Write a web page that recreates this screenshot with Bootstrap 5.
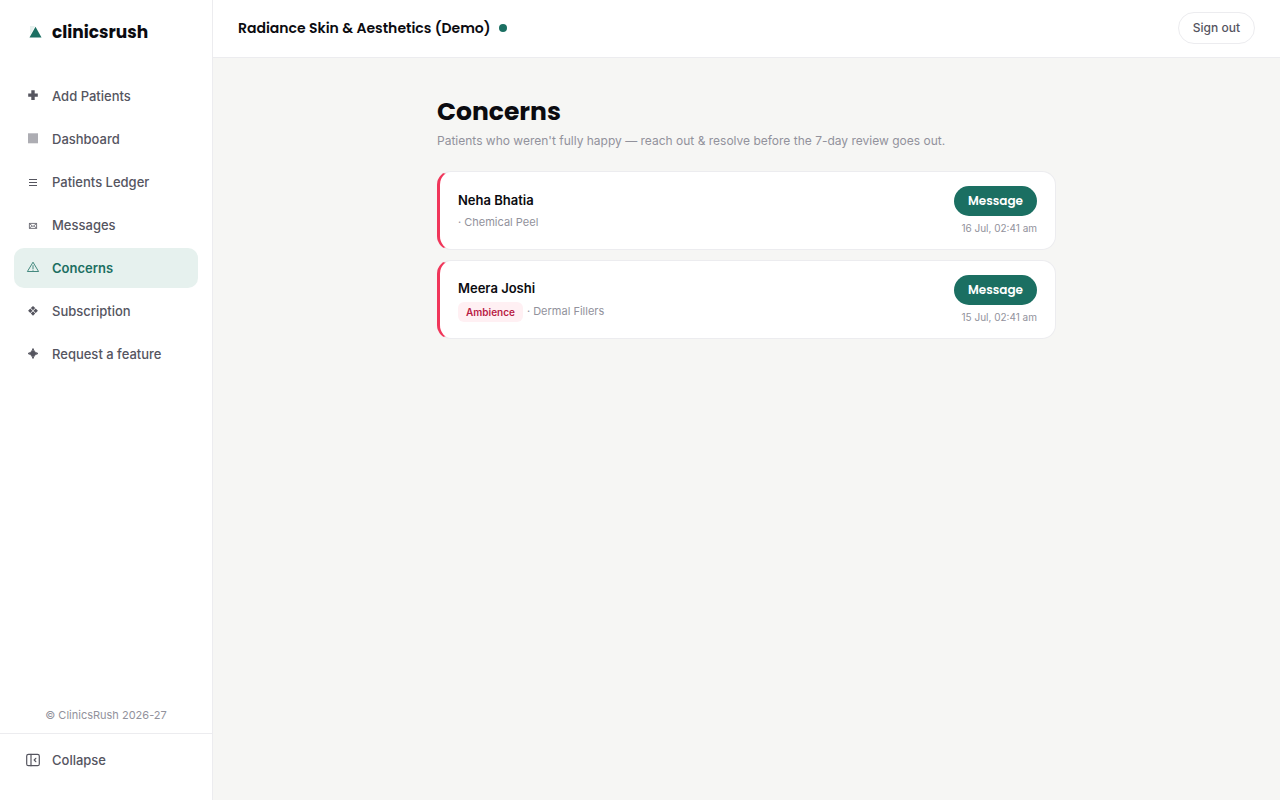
<!DOCTYPE html>
<html lang="en">
<head>
<meta charset="utf-8">
<meta name="viewport" content="width=device-width, initial-scale=1">
<title>Concerns · clinicsrush</title>
<link href="https://cdn.jsdelivr.net/npm/bootstrap@5.3.0/dist/css/bootstrap.min.css" rel="stylesheet">
<style>
  :root { --brand: #1b6f62; --ink: #0b0b10; --slate: #55555f; --muted: #92929c; --line: #ececef; }
  body { font-family: Inter, "Liberation Sans", sans-serif; font-size: 13px; line-height: 20px; color: var(--ink); background: #f6f6f4; }
  .display-font { font-family: Poppins, Inter, "Liberation Sans", sans-serif; }
  .sidebar { width: 213px; border-right: 1px solid var(--line); }
  .brand { height: 64px; padding-left: 29px; gap: 10px; font-size: 17px; font-weight: 700; color: var(--ink); }
  .side-nav { padding: 12px 14px; gap: 3px; }
  .side-link { height: 40px; padding: 0 12px; gap: 12px; border: 0; border-radius: 10px; background: none; color: var(--slate); font-weight: 500; text-decoration: none; }
  .side-link svg { width: 14px; height: 14px; flex: none; }
  .side-link.active { background: #e6f1ee; color: var(--brand); font-weight: 600; }
  .copyright { font-size: 11px; color: var(--muted); padding-bottom: 8px; }
  .side-foot { border-top: 1px solid var(--line); padding: 6px 14px 20px; }
  .topbar { padding: 12px 25px 13px; border-bottom: 1px solid var(--line); }
  .clinic { font-size: 14px; font-weight: 600; }
  .status-dot { width: 8px; height: 8px; background: var(--brand); }
  .sign-out { height: 32px; padding: 0 14px; border: 1px solid var(--line); background: #fff; color: var(--slate); font-size: 12px; font-weight: 500; }
  .content { max-width: 619px; padding-top: 36px; }
  .page-title { font-size: 25px; line-height: 36px; font-weight: 700; }
  .subtitle { font-size: 12px; color: var(--muted); margin: 1px 0 20px; }
  .concern-list { gap: 10px; }
  .concern { padding: 14px 18px; border: 1px solid var(--line); border-left: 3px solid #f0365a; border-radius: 14px; }
  .patient { font-size: 13px; font-weight: 600; line-height: 20px; }
  .detail { font-size: 11px; line-height: 17px; color: var(--muted); margin-top: 4px; }
  .tag { padding: 0 8px; border-radius: 6px; background: #fff0f3; color: #b91c45; font-size: 10px; line-height: 20px; font-weight: 600; }
  .message { height: 30px; padding: 0 14px; border: 0; background: var(--brand); color: #fff; font-size: 12px; font-weight: 600; }
  .stamp { font-size: 10px; line-height: 14px; color: var(--muted); margin-top: 5px; }
</style>
</head>
<body>
<div class="d-flex min-vh-100">
  <aside class="sidebar d-flex flex-column flex-shrink-0 bg-white">
    <a href="#" class="brand display-font d-flex align-items-center text-decoration-none">
      <svg width="13" height="13" viewBox="0 0 13 13" aria-hidden="true"><path d="M1 0h5L1 9z" fill="#e6f1ee"/><path d="M6.500 .8 12.500 11.500H.5z" fill="#1b6f62"/></svg>
      <span>clinicsrush</span>
    </a>
    <nav class="side-nav d-flex flex-column">
      <a href="#" class="side-link d-flex align-items-center"><svg viewBox="0 0 14 14" fill="currentColor" aria-hidden="true"><path d="M5.300 1.300h3.400v3.100h3.100v3.400H8.700v3.100H5.300V7.800H2.200V4.400h3.100z"/></svg>Add Patients</a>
      <a href="#" class="side-link d-flex align-items-center"><svg viewBox="0 0 14 14" aria-hidden="true"><path d="M2 1.300h10v10H2z" fill="#adadb3"/></svg>Dashboard</a>
      <a href="#" class="side-link d-flex align-items-center"><svg viewBox="0 0 14 14" fill="none" stroke="currentColor" aria-hidden="true"><path d="M3 4.500h8M3 7.500h8M3 10.500h8"/></svg>Patients Ledger</a>
      <a href="#" class="side-link d-flex align-items-center"><svg viewBox="0 0 14 14" fill="none" stroke="currentColor" stroke-width=".8" aria-hidden="true"><path d="M3.400 5.400h7.200v5H3.400zM3.400 5.400 7 8.600l3.600-3.200M3.400 10.400 6 7.800M10.600 10.400 8 7.800"/></svg>Messages</a>
      <a href="#" class="side-link active d-flex align-items-center" aria-current="page"><svg viewBox="0 0 14 14" fill="none" stroke="currentColor" stroke-width=".8" stroke-linejoin="round" aria-hidden="true"><path d="M7 1.200 12.600 10.500H1.400zM7 4.200v3.900M7 8.800v.9"/></svg>Concerns</a>
      <a href="#" class="side-link d-flex align-items-center"><svg viewBox="0 0 14 14" fill="currentColor" aria-hidden="true"><path d="M7 1.900 9.200 4.100 7 6.300 4.800 4.100zM7 7.300l2.200 2.200L7 11.700 4.800 9.500zM4.300 4.600 6.500 6.800 4.300 9 2.100 6.800zM9.700 4.600 11.900 6.800 9.700 9 7.500 6.800z"/></svg>Subscription</a>
      <a href="#" class="side-link d-flex align-items-center"><svg viewBox="0 0 14 14" fill="currentColor" aria-hidden="true"><path d="M7 1.500Q7.800 5.700 12 6.500 7.800 7.300 7 11.500 6.200 7.300 2 6.500 6.200 5.700 7 1.500z" stroke="currentColor" stroke-width=".9"/></svg>Request a feature</a>
    </nav>
    <div class="copyright mt-auto text-center">© ClinicsRush 2026-27</div>
    <div class="side-foot">
      <button type="button" class="side-link d-flex align-items-center w-100"><svg viewBox="0 0 14 14" fill="none" stroke="currentColor" stroke-width="1.200" stroke-linecap="round" stroke-linejoin="round" aria-hidden="true"><rect x=".7" y="1.300" width="12.600" height="11.400" rx="1.800"/><path d="M5 1.300v11.400M9.800 5.300 8.200 7l1.600 1.700"/></svg>Collapse</button>
    </div>
  </aside>
  <div class="flex-grow-1">
    <header class="topbar d-flex align-items-center justify-content-between bg-white">
      <div class="d-flex align-items-center gap-2">
        <span class="clinic display-font">Radiance Skin &amp; Aesthetics (Demo)</span>
        <span class="status-dot rounded-circle"></span>
      </div>
      <button type="button" class="sign-out rounded-pill">Sign out</button>
    </header>
    <main class="content mx-auto">
      <h1 class="page-title display-font mb-0">Concerns</h1>
      <p class="subtitle">Patients who weren't fully happy — reach out &amp; resolve before the 7-day review goes out.</p>
      <div class="concern-list d-flex flex-column">
        <article class="concern bg-white d-flex align-items-center justify-content-between">
          <div>
            <div class="patient">Neha Bhatia</div>
            <div class="detail">· Chemical Peel</div>
          </div>
          <div class="d-flex flex-column align-items-end">
            <button type="button" class="message display-font rounded-pill">Message</button>
            <div class="stamp">16 Jul, 02:41 am</div>
          </div>
        </article>
        <article class="concern bg-white d-flex align-items-center justify-content-between">
          <div>
            <div class="patient">Meera Joshi</div>
            <div class="detail d-flex align-items-center"><span class="tag">Ambience</span><span class="ms-1">· Dermal Fillers</span></div>
          </div>
          <div class="d-flex flex-column align-items-end">
            <button type="button" class="message display-font rounded-pill">Message</button>
            <div class="stamp">15 Jul, 02:41 am</div>
          </div>
        </article>
      </div>
    </main>
  </div>
</div>
<script src="https://cdn.jsdelivr.net/npm/bootstrap@5.3.0/dist/js/bootstrap.bundle.min.js"></script>
</body>
</html>
